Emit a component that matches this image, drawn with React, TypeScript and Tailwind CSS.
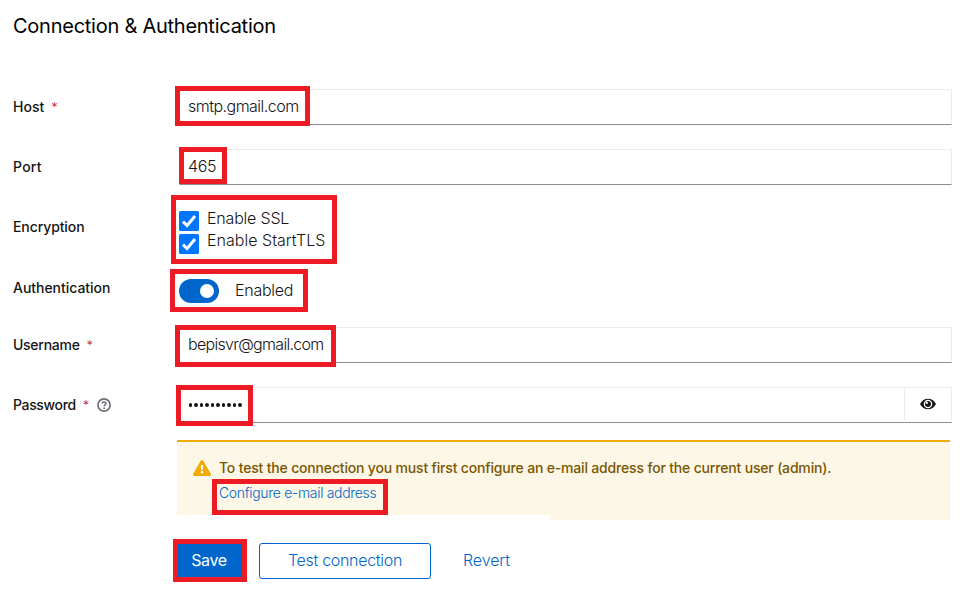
import React from "react";

function Mark({ className }: { className: string }) {
  return <span className={`pointer-events-none absolute border-[5px] border-[#ed1c24] ${className}`} />;
}

function Label({ text, spacing, required, children }: { text: string; spacing: string; required?: boolean; children?: React.ReactNode }) {
  return (
    <div className="flex items-center text-sm font-medium text-[#151515]">
      <span className={`whitespace-nowrap ${spacing}`}>{text}</span>
      {required && <span className="ml-[7px] text-[13px] leading-none font-light text-[#c9190b]">*</span>}
      {children}
    </div>
  );
}

const field = "h-9 border border-[#ededed] border-b-[#8a8d90] text-base font-light text-[#151515]";

function Check({ label, spacing }: { label: string; spacing: string }) {
  return (
    <label className="flex h-[23px] items-start">
      <svg className="h-5 w-5" viewBox="0 0 20 20">
        <rect width="20" height="20" rx="1.5" fill="#0075ff" />
        <path d="M4 10.6 8.1 14.6 16 5" fill="none" stroke="#fff" strokeWidth="3" />
      </svg>
      <span className={`ml-2 leading-[22px] whitespace-nowrap ${spacing}`}>{label}</span>
    </label>
  );
}

export default function App() {
  return (
    <main className="h-[602px] w-[969px] overflow-hidden bg-white pl-[13px] font-['Inter','Liberation_Sans',sans-serif] text-[#151515]">
      <h1 className="flex h-[89px] items-start pt-[11px] text-xl leading-[30px] tracking-[-0.25px] text-black">Connection &amp; Authentication</h1>

      <form className="grid grid-cols-[166px_773px]">
        <div className="flex h-9 items-center"><Label text="Host" spacing="tracking-[0]" required /></div>
        <div className="relative h-[60px]">
          <div className={`${field} flex items-center pb-0.5 pl-2`}><span className="tracking-[-0.52px]">smtp.gmail.com</span></div>
          <Mark className="-top-[3px] -left-1 h-10 w-[135px]" />
        </div>

        <div className="flex h-9 items-center"><Label text="Port" spacing="tracking-[0.25px]" /></div>
        <div className="relative h-[60px]">
          <div className={`${field} flex items-center pb-0.5 pl-2`}><span className="tracking-[-0.3px]">465</span></div>
          <Mark className="-top-0.5 left-0 h-[37px] w-12" />
        </div>

        <div className="flex h-9 items-center"><Label text="Encryption" spacing="tracking-[-0.1px]" /></div>
        <div className="relative h-[70px] pt-0.5 text-base font-light">
          <Check label="Enable SSL" spacing="-mt-1 tracking-[-0.2px]" />
          <Check label="Enable StartTLS" spacing="-mt-[5px] tracking-[0.02px]" />
          <Mark className="-top-[14px] -left-2 h-[69px] w-[166px]" />
        </div>

        <div className="flex h-[18px] items-center"><Label text="Authentication" spacing="tracking-[-0.03px]" /></div>
        <div className="relative h-12">
          <div className="flex h-6 items-center text-base font-light">
            <span className="flex h-6 w-10 items-center justify-end rounded-full bg-[#06c] pr-[5px]"><span className="h-3.5 w-3.5 rounded-full bg-white" /></span>
            <span className="ml-4 pb-0.5 tracking-[-0.25px]">Enabled</span>
          </div>
          <Mark className="-top-2.5 -left-[9px] h-[43px] w-[138px]" />
        </div>

        <div className="flex h-9 items-center"><Label text="Username" spacing="tracking-[-0.27px]" required /></div>
        <div className="relative h-[60px]">
          <div className={`${field} flex items-center pb-0.5 pl-2`}><span className="tracking-[-0.7px]">bepisvr@gmail.com</span></div>
          <Mark className="-top-0.5 -left-1 h-[42px] w-[161px]" />
        </div>

        <div className="flex h-9 items-center">
          <Label text="Password" spacing="tracking-[-0.35px]" required>
            <svg className="ml-2 h-3.5 w-3.5" viewBox="0 0 14 14" fill="none" stroke="#6a6e73">
              <circle cx="7" cy="7" r="6.1" strokeWidth="1.6" />
              <path d="M5.1 5.5C5.3 3.6 9 3.5 8.9 5.6 8.8 6.9 7.1 6.9 7.1 8.3" strokeWidth="1.5" />
              <circle cx="7.1" cy="10.2" r=".9" fill="#6a6e73" stroke="none" />
            </svg>
          </Label>
        </div>
        <div className="relative h-[53px]">
          <div className="flex">
            <div className={`${field} flex w-[725px] items-center gap-[2.3px] border-r-0 pl-[9px]`}>
              {Array.from({ length: 10 }, (_, i) => <span key={i} className="h-[3.2px] w-[3.2px] rounded-full bg-[#151515]" />)}
            </div>
            <div className={`${field} flex w-12 items-center justify-center pb-0.5`}>
              <svg className="h-3 w-4" viewBox="0 0 16 12">
                <path d="M0 6C3.4-1.1 12.6-1.1 16 6 12.6 13.1 3.4 13.1 0 6Z" fill="#151515" />
                <circle cx="8" cy="6" r="4.3" fill="#fff" />
                <circle cx="8" cy="6" r="3" fill="#151515" />
                <circle cx="6.8" cy="4.7" r="1.2" fill="#fff" />
              </svg>
            </div>
          </div>
          <Mark className="-top-0.5 -left-[3px] h-[41px] w-[77px]" />
        </div>
      </form>

      <section className="relative ml-[164px] h-20 w-[773px] border-t-2 border-[#f0ab00] bg-[#fdf7e7] pt-4 pl-4">
        <div className="flex h-5 items-center">
          <svg className="h-4 w-[18px]" viewBox="0 0 18 16">
            <path d="M7.7.8Q9-.8 10.3.8L17.7 13.7Q18.5 15.7 16.5 16H1.5Q-.5 15.7.3 13.7Z" fill="#f0ab00" />
            <path d="M7.8 5h2.4l-.4 5H8.2Z" fill="#fff" />
            <circle cx="9" cy="12.3" r="1.3" fill="#fff" />
          </svg>
          <span className="ml-2 text-sm font-medium tracking-[-0.175px] whitespace-nowrap text-[#795600]">To test the connection you must first configure an e-mail address for the current user (admin).</span>
        </div>
        <a className="mt-[5px] ml-[26px] block w-max text-sm leading-5 font-light tracking-[-0.32px] text-[#06c]">Configure e-mail address</a>
        <span className="absolute bottom-0 left-0 h-[5px] w-[373px] bg-white" />
        <Mark className="top-[37px] left-[35px] h-9 w-44" />
      </section>

      <div className="mt-[19px] ml-[160px] flex h-[43px] items-center text-base">
        <button className="h-[43px] w-[74px] border-[5px] border-[#ed1c24] bg-[#06c] pr-0.5 pb-0.5 text-white"><span className="tracking-[-0.35px]">Save</span></button>
        <button className="ml-3 h-9 w-[172px] rounded-[3px] border border-[#06c] pb-0.5 font-light whitespace-nowrap text-[#06c]"><span className="tracking-[-0.3px]">Test connection</span></button>
        <button className="ml-8 pb-0.5 font-light text-[#06c]"><span className="tracking-[-0.1px]">Revert</span></button>
      </div>
    </main>
  );
}
